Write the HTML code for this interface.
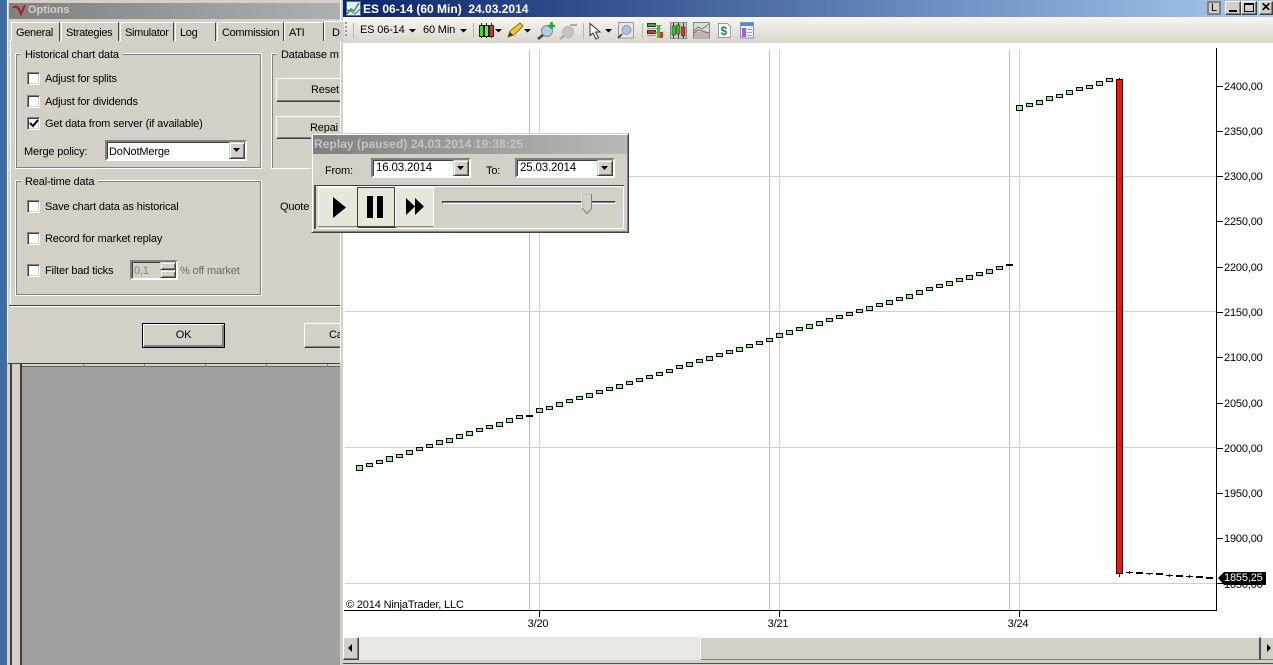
<!DOCTYPE html>
<html><head><meta charset="utf-8"><style>
html,body{margin:0;padding:0;width:1273px;height:665px;overflow:hidden;background:#3a6ea5}
*{box-sizing:border-box}
div,span{position:absolute}
body,div,span{font-family:"Liberation Sans",sans-serif;font-size:11px;color:#000;white-space:nowrap;line-height:17px;letter-spacing:-.16px}
.g{background:#d4d0c8}
.grp{border:1px solid #fff;outline:1px solid #808080;outline-offset:-2px}
.lg{background:#d4d0c8;padding:0 4px}
.cb{width:13px;height:13px;background:#fff;border:1px solid #808080;border-right-color:#fff;border-bottom-color:#fff;box-shadow:inset 1px 1px 0 #404040,inset -1px -1px 0 #d4d0c8}
.tab{top:22px;height:19px;background:#d4d0c8;border-top:1px solid #fff;border-left:1px solid #fff;border-right:1px solid #404040;padding:2px 0 0 4px;letter-spacing:-.32px;overflow:hidden}
.btn{background:#d4d0c8;border:1px solid;border-color:#fff #404040 #404040 #fff;box-shadow:inset -1px -1px 0 #808080;text-align:center}
.combo{background:#fff;border:2px solid;border-color:#808080 #fff #fff #808080;box-shadow:inset 1px 1px 0 #404040}
.ar{background:#d4d0c8;border:1px solid;border-color:#d4d0c8 #404040 #404040 #d4d0c8;box-shadow:inset 1px 1px 0 #fff,inset -1px -1px 0 #808080}
.yl{left:1224px;width:42px}
.xl{top:616px;width:30px;text-align:center}
</style></head><body>

<!-- chart window -->
<div style="left:340px;top:0;width:933px;height:665px;background:#d4d0c8"></div>
<div style="left:343px;top:0;width:930px;height:17px;background:linear-gradient(90deg,#0a246a,#a6caf0)"></div>
<svg style="position:absolute;left:346px;top:1px" width="15" height="15"><rect x=".5" y=".5" width="14" height="14" fill="#e8eef8" stroke="#5a6a8a"/><path d="M1 13l4-5 3 2 5-8" fill="none" stroke="#2a9a3a" stroke-width="1.5"/><path d="M1 9l4 1 4 3 5-5" fill="none" stroke="#3a6ac0"/></svg>
<div style="left:363px;top:1px;color:#fff;font-weight:bold;font-size:12px;letter-spacing:0">ES 06-14 (60 Min)&nbsp; 24.03.2014</div>
<div class="btn" style="left:1207px;top:1px;width:14px;height:14px;border:2px solid #808080;box-shadow:none;font-size:11px;line-height:11px;letter-spacing:0">L</div>
<div class="btn" style="left:1225px;top:1px;width:16px;height:14px"></div><div style="left:1229px;top:10px;width:8px;height:2px;background:#000"></div>
<div class="btn" style="left:1241px;top:1px;width:16px;height:14px"></div><div style="left:1244px;top:3px;width:10px;height:9px;border:1px solid #000;border-top-width:2px"></div>
<div class="btn" style="left:1259px;top:1px;width:14px;height:14px;font-weight:bold;font-size:12px;line-height:11px;letter-spacing:0">✕</div>

<!-- toolbar -->
<div style="left:343px;top:17px;width:930px;height:26px;background:linear-gradient(180deg,#f7f6f2,#d8d5cd)"></div>
<div style="left:345px;top:22px;width:2px;height:14px;border-left:2px dotted #999"></div>
<div style="left:360px;top:22px">ES 06-14</div>
<div style="left:423px;top:22px">60 Min</div>
<svg style="position:absolute;left:0;top:0" width="780" height="44">
<path d="M353.500 23v15M473.500 23v15M583.500 23v15M642.500 23v15" stroke="#b8b5ad" fill="none"/>
<path d="M409 29h7l-3.500 3.500zM460 29h7l-3.500 3.500zM495 29h7l-3.500 3.500zM524 29h7l-3.500 3.500zM605 29h7l-3.500 3.500z" fill="#000"/>
<path d="M481.500 23v15M486.500 23v15M491.500 23v15" stroke="#222"/>
<rect x="479.500" y="25.500" width="4" height="11" fill="#40e020" stroke="#222"/>
<rect x="484.500" y="25.500" width="4" height="11" fill="#70e850" stroke="#222"/>
<rect x="489.500" y="25.500" width="4" height="11" fill="#e83020" stroke="#222"/>
<path d="M508 37l2-6 10-8 3 3-9 9z" fill="#f4cc20" stroke="#8a7020"/><path d="M508 37l2-5 3 3z" fill="#333"/>
<circle cx="547" cy="31" r="5.500" fill="#b0cce8" stroke="#7a8a9a"/><path d="M543 35l-5 4" stroke="#444" stroke-width="2.500"/><path d="M548 26h7M551.500 22v7" stroke="#10b030" stroke-width="2.500"/>
<circle cx="568" cy="32" r="5.500" fill="#c4c4c4" stroke="#b4b4b4"/><path d="M564 36l-4 3" stroke="#aaa" stroke-width="2.500"/><path d="M570 25h7" stroke="#aaa" stroke-width="2"/>
<path d="M590 23.500v12l3-2.500 3 6 2.500-1.300-3-5.700h4.500z" fill="#fff" stroke="#333"/>
<rect x="618.500" y="22.500" width="15" height="15.500" fill="#e6e6e2" stroke="#999"/><circle cx="626.500" cy="30" r="4.500" fill="#a8c4e4" stroke="#8898a8"/><path d="M622 34l-4 4" stroke="#555" stroke-width="2"/>
<path d="M647.500 23.500h8v3h-8z" fill="#30b030" stroke="#333"/><path d="M647.500 30.500h8v3h-8z" fill="#e03020" stroke="#333"/><path d="M655 25.500h7M655 32.500h7M647 28.500h14M647 35.500h9" stroke="#999"/><rect x="657" y="25" width="3" height="13" fill="#40c030"/><rect x="660" y="32" width="3" height="6" fill="#e03020"/>
<rect x="670.500" y="22.500" width="16" height="16" fill="#d0d0c8" stroke="#888"/><path d="M673.500 23v15M678.500 23v15M683.500 23v15" stroke="#333"/><rect x="672" y="26" width="3.500" height="9" fill="#40c030" stroke="#222" stroke-width=".5"/><rect x="676.500" y="25" width="3.500" height="9" fill="#30c020" stroke="#222" stroke-width=".5"/><rect x="681.500" y="27" width="3.500" height="9" fill="#e03020" stroke="#222" stroke-width=".5"/>
<rect x="693.500" y="22.500" width="16" height="15.500" fill="#dcdcd4" stroke="#888"/><rect x="694" y="32" width="15" height="6" fill="#b8b8b0"/><path d="M694 31l4-4 4 2 7-5" stroke="#30a060" fill="none"/><path d="M694 33l4-3 4 1 7 2" stroke="#d04040" fill="none"/>
<path d="M718.500 23.500h9l3 3v11h-12z" fill="#fff" stroke="#999"/><text x="720.500" y="35" font-family="Liberation Sans" font-size="12" font-weight="bold" fill="#1a8a3a">$</text>
<rect x="740.500" y="22.500" width="13" height="15.500" fill="#e8ecf8" stroke="#8090b0"/><rect x="741" y="23" width="12" height="3" fill="#4a90d0"/><rect x="742" y="28" width="4" height="9" fill="#a060e0"/><path d="M747 29.500h5M747 32.500h5M747 35.500h5" stroke="#9aa"/>
</svg>

<!-- chart -->
<div style="left:343px;top:43px;width:930px;height:594px;background:#fff"></div>
<svg style="position:absolute;left:0;top:0" width="1273" height="665" shape-rendering="crispEdges">
<path d="M345 176.500h871M345 311.500h871M345 447.500h871M345 583.500h871" stroke="#d4d0c8"/>
<path d="M529.500 50v560M769.500 50v560M1009.500 50v560" stroke="#c0c0c0"/>
<path d="M539.500 50v560M779.500 50v560M1019.500 50v560" stroke="#d4d0c8"/>
<path d="M344 610.500h873M1216.500 48v563" stroke="#000"/>
<path d="M539.500 611v6M779.500 611v6M1019.500 611v6" stroke="#000"/>
<path d="M1217 86.500h6M1217 131.500h6M1217 176.500h6M1217 221.500h6M1217 267.500h6M1217 312.500h6M1217 357.500h6M1217 403.500h6M1217 448.500h6M1217 493.500h6M1217 538.500h6M1217 583.500h6" stroke="#000"/>
<path fill="#90ee90" stroke="#000" d="M356.500 465.500h6v5h-6zM366.500 463.500h6v3h-6zM376.500 460.500h6v3h-6zM386.500 456.500h6v5h-6zM396.500 454.500h6v3h-6zM406.500 450.500h6v4h-6zM416.500 447.500h6v3h-6zM426.500 444.500h6v3h-6zM436.500 440.500h6v4h-6zM446.500 438.500h6v4h-6zM456.500 434.500h6v4h-6zM466.500 431.500h6v4h-6zM476.500 428.500h6v3h-6zM486.500 425.500h6v3h-6zM496.500 422.500h6v4h-6zM506.500 418.500h6v4h-6zM516.500 415.500h6v3h-6zM536.500 408.500h6v4h-6zM546.500 406.500h6v3h-6zM556.500 402.500h6v4h-6zM566.500 399.500h6v3h-6zM576.500 396.500h6v3h-6zM586.500 393.500h6v4h-6zM596.500 390.500h6v3h-6zM606.500 387.500h6v3h-6zM616.500 384.500h6v4h-6zM626.500 381.500h6v3h-6zM636.500 378.500h6v3h-6zM646.500 375.500h6v3h-6zM656.500 372.500h6v3h-6zM666.500 369.500h6v3h-6zM676.500 365.500h6v3h-6zM686.500 362.500h6v4h-6zM696.500 359.500h6v3h-6zM706.500 356.500h6v4h-6zM716.500 353.500h6v3h-6zM726.500 350.500h6v3h-6zM736.500 347.500h6v4h-6zM746.500 344.500h6v3h-6zM756.500 341.500h6v3h-6zM766.500 338.500h6v3h-6zM776.500 333.500h6v4h-6zM786.500 330.500h6v4h-6zM796.500 327.500h6v3h-6zM806.500 324.500h6v4h-6zM816.500 321.500h6v4h-6zM826.500 318.500h6v3h-6zM836.500 315.500h6v3h-6zM846.500 312.500h6v3h-6zM856.500 309.500h6v3h-6zM866.500 306.500h6v4h-6zM876.500 303.500h6v3h-6zM886.500 300.500h6v4h-6zM896.500 297.500h6v3h-6zM906.500 294.500h6v4h-6zM916.500 290.500h6v4h-6zM926.500 287.500h6v3h-6zM936.500 284.500h6v3h-6zM946.500 281.500h6v4h-6zM956.500 278.500h6v3h-6zM966.500 275.500h6v4h-6zM976.500 272.500h6v3h-6zM986.500 269.500h6v4h-6zM996.500 266.500h6v3h-6z"/>
<path fill="#000" d="M526 415h7v2h-7zM1006 264h7v2h-7z"/>
<path stroke="#000" d="M1016.500 105.500h6v5h-6zM1026.500 103.500h6v3h-6zM1036.500 100.500h6v4h-6zM1046.500 96.500h6v4h-6zM1056.500 94.500h6v3h-6zM1066.500 90.500h6v4h-6zM1076.500 87.500h6v3h-6zM1086.500 85.500h6v3h-6zM1096.500 81.500h6v4h-6zM1106.500 78.500h6v3h-6z" fill="#90ee90"/>
<rect x="1116.500" y="79.500" width="6" height="494" fill="#ff1000" stroke="#000"/>
<path d="M1119.500 78v2M1119.500 574v3" stroke="#000"/>
<path stroke="#000" d="M1126 572.500h7M1129.500 571v3M1146 573.500h7M1149.500 573v2M1166 575.500h7M1169.500 574v3M1186 576.500h7M1189.500 575v3"/>
<path fill="#000" d="M1136 572h7v2h-7zM1156 573h7v2h-7zM1176 575h7v2h-7zM1196 576h7v2h-7zM1206 577h7v2h-7z"/>
</svg>
<div style="left:346px;top:597px">© 2014 NinjaTrader, LLC</div>
<div class="xl" style="left:523px">3/20</div><div class="xl" style="left:763px">3/21</div><div class="xl" style="left:1003px">3/24</div>
<div class="yl" style="top:79px">2400,00</div><div class="yl" style="top:124px">2350,00</div><div class="yl" style="top:169px">2300,00</div><div class="yl" style="top:214px">2250,00</div><div class="yl" style="top:260px">2200,00</div><div class="yl" style="top:305px">2150,00</div><div class="yl" style="top:350px">2100,00</div><div class="yl" style="top:396px">2050,00</div><div class="yl" style="top:441px">2000,00</div><div class="yl" style="top:486px">1950,00</div><div class="yl" style="top:531px">1900,00</div><div class="yl" style="top:577px">1850,00</div>
<svg style="position:absolute;left:1218px;top:571px" width="50" height="14"><path d="M0 7l6-6h42v13H6z" fill="#000"/></svg>
<div style="left:1224px;top:570px;color:#fff">1855,25</div>

<!-- scrollbar -->
<div style="left:343px;top:637px;width:930px;height:23px;background:#e9e7e3"></div>
<div style="left:700px;top:637px;width:561px;height:23px;background:#d4d0c8;border-top:1px solid #fff;border-left:1px solid #fff;border-right:2px solid #505050;border-bottom:1px solid #808080"></div>
<div class="btn" style="left:343px;top:637px;width:16px;height:23px"></div>
<svg style="position:absolute;left:348px;top:644px" width="6" height="9"><path d="M4 0v8L0 4z" fill="#000"/></svg>
<div style="left:1261px;top:637px;width:12px;height:23px;background:#d4d0c8;border-top:1px solid #fff;border-bottom:1px solid #808080"></div>
<svg style="position:absolute;left:1267px;top:644px" width="6" height="9"><path d="M0 0v8l4-4z" fill="#000"/></svg>
<div style="left:343px;top:660px;width:930px;height:3px;background:#d4d0c8"></div>
<div style="left:343px;top:663px;width:930px;height:1px;background:#505050"></div>

<!-- background window under dialog -->
<div style="left:7px;top:360px;width:333px;height:305px;background:#d4d0c8"></div>
<div style="left:10px;top:364px;width:2px;height:301px;background:#404040"></div>
<div style="left:20px;top:364px;width:2px;height:301px;background:#404040"></div>
<div style="left:22px;top:367px;width:318px;height:298px;background:#a0a0a0"></div>
<div style="left:22px;top:366px;width:318px;height:1px;background:#606060"></div>
<div style="left:83px;top:364px;width:1px;height:3px;background:#808080"></div>
<div style="left:144px;top:364px;width:1px;height:3px;background:#808080"></div>
<div style="left:205px;top:364px;width:1px;height:3px;background:#808080"></div>
<div style="left:266px;top:364px;width:1px;height:3px;background:#808080"></div>
<div style="left:327px;top:364px;width:1px;height:3px;background:#808080"></div>

<!-- options dialog -->
<div class="g" style="left:7px;top:0;width:333px;height:364px;border-left:1px solid #fff;border-bottom:1px solid #404040"></div>
<div style="left:340px;top:0;width:1px;height:364px;background:#fff"></div>
<div style="left:9px;top:3px;width:331px;height:16px;background:linear-gradient(90deg,#808080,#b0b0b0)"></div>
<svg style="position:absolute;left:11px;top:3px" width="17" height="14"><path d="M2 5q3-3 6 1l2 5 4-9" fill="none" stroke="#b01818" stroke-width="2"/></svg>
<div style="left:28px;top:2px;color:#d4d0c8;font-weight:bold;letter-spacing:0">Options</div>
<div style="left:9px;top:40px;width:331px;height:1px;background:#fff"></div>
<div class="tab" style="left:11px;width:49px">General</div>
<div class="tab" style="left:61px;width:58px">Strategies</div>
<div class="tab" style="left:120px;width:54px">Simulator</div>
<div class="tab" style="left:175px;width:41px">Log</div>
<div class="tab" style="left:217px;width:67px">Commission</div>
<div class="tab" style="left:284px;width:40px">ATI</div>
<div class="tab" style="left:324px;top:21px;width:20px;height:20px;border-right:0;padding-left:7px;padding-top:3px;z-index:1">D</div>
<div style="left:10px;top:40px;width:1px;height:266px;background:#fff"></div>
<div style="left:9px;top:305px;width:331px;height:1px;background:#404040"></div>
<div style="left:9px;top:306px;width:331px;height:1px;background:#fff"></div>

<div class="grp" style="left:15px;top:53px;width:247px;height:116px"></div>
<div class="lg" style="left:21px;top:47px">Historical chart data</div>
<div class="cb" style="left:27px;top:72px"></div><div style="left:45px;top:71px">Adjust for splits</div>
<div class="cb" style="left:27px;top:95px"></div><div style="left:45px;top:94px">Adjust for dividends</div>
<div class="cb" style="left:27px;top:117px"></div><div style="left:45px;top:116px">Get data from server (if available)</div>
<svg style="position:absolute;left:29px;top:119px" width="10" height="10"><path d="M1 4l3 3 5-6" fill="none" stroke="#000" stroke-width="2"/></svg>
<div style="left:24px;top:144px">Merge policy:</div>
<div class="combo" style="left:105px;top:140px;width:142px;height:21px"></div>
<div style="left:109px;top:144px">DoNotMerge</div>
<div class="ar" style="left:229px;top:142px;width:16px;height:17px"></div>
<svg style="position:absolute;left:233px;top:148px" width="8" height="5"><path d="M0 0h7L3.500 4z" fill="#000"/></svg>

<div class="grp" style="left:15px;top:180px;width:247px;height:116px"></div>
<div class="lg" style="left:21px;top:174px;height:15px;line-height:17px;overflow:hidden">Real-time data</div>
<div class="cb" style="left:27px;top:200px"></div><div style="left:45px;top:199px">Save chart data as historical</div>
<div class="cb" style="left:27px;top:232px"></div><div style="left:45px;top:231px">Record for market replay</div>
<div class="cb" style="left:27px;top:264px"></div><div style="left:45px;top:263px">Filter bad ticks</div>
<div class="combo" style="left:130px;top:260px;width:48px;height:20px;background:#d4d0c8"></div>
<div style="left:134px;top:263px;color:#808080">0,1</div>
<div class="ar" style="left:160px;top:262px;width:16px;height:8px"></div><div class="ar" style="left:160px;top:270px;width:16px;height:8px"></div>
<div style="left:180px;top:263px;color:#6a6a6a">% off market</div>

<div style="left:271px;top:53px;width:69px;height:116px;border:1px solid #fff;border-right:0;box-shadow:inset 1px 1px 0 #808080"></div>
<div class="lg" style="left:277px;top:47px;padding-right:0;width:63px;height:15px;overflow:hidden">Database m</div>
<div class="btn" style="left:276px;top:78px;width:64px;height:24px;border-right:0;box-shadow:inset 0 -1px 0 #808080"></div><div style="left:311px;top:82px">Reset</div>
<div class="btn" style="left:276px;top:116px;width:64px;height:23px;border-right:0;box-shadow:inset 0 -1px 0 #808080"></div><div style="left:310px;top:120px">Repai</div>
<div style="left:280px;top:199px">Quote</div>

<div class="btn" style="left:142px;top:323px;width:83px;height:25px;border:1px solid #000;box-shadow:inset 1px 1px 0 #fff,inset -2px -2px 0 #808080;line-height:22px">OK</div>
<div class="btn" style="left:304px;top:323px;width:36px;height:25px;border-right:0;box-shadow:inset 0 -1px 0 #808080;text-align:left;padding-left:24px;line-height:22px;overflow:hidden">Ca</div>

<!-- replay -->
<div class="g" style="left:311px;top:133px;width:318px;height:100px;border:1px solid;border-color:#d4d0c8 #404040 #404040 #d4d0c8;box-shadow:inset 1px 1px 0 #fff,inset -1px -1px 0 #808080"></div>
<div style="left:313px;top:135px;width:314px;height:19px;background:linear-gradient(90deg,#808080,#b8b8b8)"></div>
<div style="left:314px;top:136px;color:#c4c4c4;font-weight:bold;font-size:12px;letter-spacing:.05px">Replay (paused) 24.03.2014 19:38:25</div>
<div style="left:325px;top:163px">From:</div>
<div class="combo" style="left:371px;top:158px;width:100px;height:20px"></div>
<div style="left:376px;top:160px;font-size:11.500px">16.03.2014</div>
<div class="ar" style="left:453px;top:160px;width:16px;height:16px"></div>
<svg style="position:absolute;left:457px;top:166px" width="8" height="5"><path d="M0 0h7L3.500 4z" fill="#000"/></svg>
<div style="left:486px;top:163px">To:</div>
<div class="combo" style="left:515px;top:158px;width:100px;height:20px"></div>
<div style="left:520px;top:160px;font-size:11.500px">25.03.2014</div>
<div class="ar" style="left:597px;top:160px;width:16px;height:16px"></div>
<svg style="position:absolute;left:601px;top:166px" width="8" height="5"><path d="M0 0h7L3.500 4z" fill="#000"/></svg>
<div style="left:314px;top:185px;height:2px;border-top:1px solid #404040;border-bottom:1px solid #fff;width:310px"></div>
<div style="left:623px;top:186px;width:1px;height:43px;background:#fff"></div>
<div style="left:314px;top:228px;width:310px;height:1px;background:#fff"></div>
<div style="left:314px;top:186px;width:2px;height:43px;background:#505050"></div>
<div style="left:318px;top:187px;width:40px;height:40px;background:#e8e8da;border:1px solid;border-color:#fff #404040 #808080 #fff"></div>
<div style="left:357px;top:187px;width:38px;height:40px;background:#e8e8da;border:1px solid #404040;box-shadow:1px 1px 0 #404040"></div>
<div style="left:395px;top:187px;width:39px;height:40px;background:#e8e8da;border:1px solid;border-color:#fff #fff #808080 #fff"></div>
<svg style="position:absolute;left:0;top:0" width="640" height="240"><path d="M333 197l13 10.500-13 10.500z" fill="#000"/><rect x="367" y="196" width="6" height="22" fill="#000"/><rect x="377" y="196" width="6" height="22" fill="#000"/><path d="M406 198l9 8.500-9 8.500zM415 198l9 8.500-9 8.500z" fill="#000"/></svg>
<div style="left:442px;top:201px;width:174px;height:3px;border:1px solid;border-color:#404040 #fff #fff #404040;background:#808080"></div>
<svg style="position:absolute;left:581px;top:194px" width="12" height="22"><path d="M1.500.5h9v14l-4.500 5-4.500-5z" fill="#d4d0c8" stroke="#808080"/><path d="M1 14V0h9" fill="none" stroke="#fff"/></svg>
</body></html>
